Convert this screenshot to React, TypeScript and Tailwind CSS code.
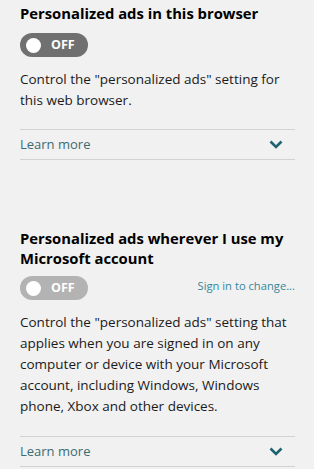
import React from "react";

const font = { fontFamily: '"Open Sans", "Noto Sans", sans-serif' };

function Toggle({ disabled }: { disabled?: boolean }) {
  return (
    <div
      className={`flex h-[24px] w-[68px] items-center rounded-full pl-[6px] ${
        disabled ? "bg-[#b3b3b3]" : "bg-[#707070]"
      }`}
    >
      <div className="h-[15px] w-[15px] rounded-full bg-white" />
      <span className="ml-[10px] text-[12.5px] font-bold leading-none text-white">OFF</span>
    </div>
  );
}

function LearnMore() {
  return (
    <div className="flex h-[31px] items-center justify-between border-y border-[#d2d2d2] pr-[12px]">
      <span className="text-[13px] text-[#3b6b73]">Learn more</span>
      <svg width="14" height="9" viewBox="0 0 14 9">
        <path d="M1.5 1.5 L7 7 L12.5 1.5" fill="none" stroke="#1e6470" strokeWidth="2.6" />
      </svg>
    </div>
  );
}

export default function App() {
  return (
    <div
      className="h-[469px] w-[314px] overflow-hidden bg-[#f1f1f1] pl-[20px] pr-[19px] text-[#1a1a1a]"
      style={font}
    >
      <h2 className="pt-[3px] text-[14.8px] font-bold leading-[21px] text-black">
        Personalized ads in this browser
      </h2>
      <div className="mt-[9px]">
        <Toggle />
      </div>
      <p className="mt-[12px] text-[13.5px] leading-[21px]">
        Control the "personalized ads" setting for this web browser.
      </p>
      <div className="mt-[18px]">
        <LearnMore />
      </div>

      <h2 className="mt-[68px] text-[14.8px] font-bold leading-[20px] text-black">
        Personalized ads wherever I use my Microsoft account
      </h2>
      <div className="mt-[8px] flex items-center justify-between">
        <Toggle disabled />
        <span className="mb-[4px] text-[11.2px] text-[#35879c]">Sign in to change...</span>
      </div>
      <p className="mt-[12px] text-[13.5px] leading-[21px]">
        Control the "personalized ads" setting that applies when you are signed in on any computer or
        device with your Microsoft account, including Windows, Windows phone, Xbox and other devices.
      </p>
      <div className="mt-[19px]">
        <LearnMore />
      </div>
    </div>
  );
}
